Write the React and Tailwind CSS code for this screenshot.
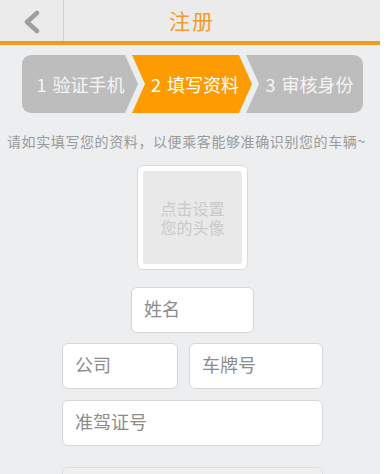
import React from 'react';

const font = { fontFamily: '"Noto Sans CJK SC", "Noto Sans", sans-serif' };

const Field = ({ label, className = '' }) => (
  <div
    className={`h-[46px] bg-white border border-[#d6d6d6] rounded-[6px] flex items-center pl-[12px] pb-[4px] text-[18px] text-[#8c8c8c] ${className}`}
  >
    {label}
  </div>
);

export default function App() {
  return (
    <div className="flex h-[474px] overflow-hidden bg-white" style={font}>
      <div className="w-[380px] bg-[#eceef0] flex flex-col">
        {/* Header */}
        <div className="h-[45px] shrink-0 bg-[#ebebeb] border-b-4 border-[#f39a1e] flex items-stretch relative">
          <div className="w-[64px] border-r border-[#d2d2d2] flex items-center justify-center">
            <svg width="20" height="24" viewBox="0 0 20 24" className="ml-[2px] mt-[2px]">
              <path d="M14 3 L4 12 L14 21" fill="none" stroke="#9e9e9e" strokeWidth="4.5" strokeLinecap="round" strokeLinejoin="round" />
            </svg>
          </div>
          <div className="absolute inset-0 flex items-center justify-center pointer-events-none">
            <span className="text-[21px] text-[#f39a2a] tracking-[2px] ml-[4px]">注册</span>
          </div>
        </div>

        {/* Steps */}
        <div className="flex shrink-0 mt-[10px] ml-[22px] h-[58px] text-[18px] text-[#f5f5f5] whitespace-pre">
          <div className="w-[116px] bg-[#bdbdbd] rounded-l-[9px] flex items-center justify-center pl-[14px] pr-[13px] [clip-path:polygon(0_0,calc(100%_-_13px)_0,100%_50%,calc(100%_-_13px)_100%,0_100%)]">
            <span className="mr-[6px]">1</span>验证手机
          </div>
          <div className="w-[120px] -ml-[6px] bg-[#fd9b03] flex items-center justify-center pl-[16px] pr-[10px] text-white [clip-path:polygon(0_0,calc(100%_-_13px)_0,100%_50%,calc(100%_-_13px)_100%,0_100%,13px_50%)]">
            <span className="mr-[6px]">2</span>填写资料
          </div>
          <div className="w-[117px] -ml-[6px] bg-[#bdbdbd] rounded-r-[9px] flex items-center justify-center pl-[13px] pr-[3px] [clip-path:polygon(0_0,100%_0,100%_100%,0_100%,13px_50%)]">
            <span className="mr-[6px]">3</span>审核身份
          </div>
        </div>

        {/* Hint */}
        <p className="mt-[18px] pl-[7px] text-[14px] leading-[20px] text-[#9a9a9a] whitespace-nowrap tracking-[0.6px]">
          请如实填写您的资料，以便乘客能够准确识别您的车辆~
        </p>

        {/* Avatar */}
        <div className="mt-[14px] shrink-0 self-start ml-[137px] w-[111px] h-[105px] bg-white border border-[#d9d9d9] rounded-[6px] p-[5px]">
          <div className="w-full h-full bg-[#e9e9e9] rounded-[3px] flex items-center justify-center">
            <p className="text-[16px] leading-[19px] text-[#c9c9c9] text-center">
              点击设置
              <br />
              您的头像
            </p>
          </div>
        </div>

        {/* Form */}
        <div className="mt-[17px] shrink-0 ml-[131px] w-[123px]">
          <Field label="姓名" />
        </div>
        <div className="mt-[10px] shrink-0 ml-[62px] w-[261px] flex gap-[11px]">
          <Field label="公司" className="w-[116px]" />
          <Field label="车牌号" className="flex-1" />
        </div>
        <div className="mt-[11px] shrink-0 ml-[62px] w-[261px]">
          <Field label="准驾证号" />
        </div>
        <div className="mt-[21px] shrink-0 ml-[62px] w-[261px] h-[46px] bg-[#f0f0f0] border border-[#dcdcdc] rounded-[6px]" />
      </div>
      <div className="flex-1 bg-white" />
    </div>
  );
}
